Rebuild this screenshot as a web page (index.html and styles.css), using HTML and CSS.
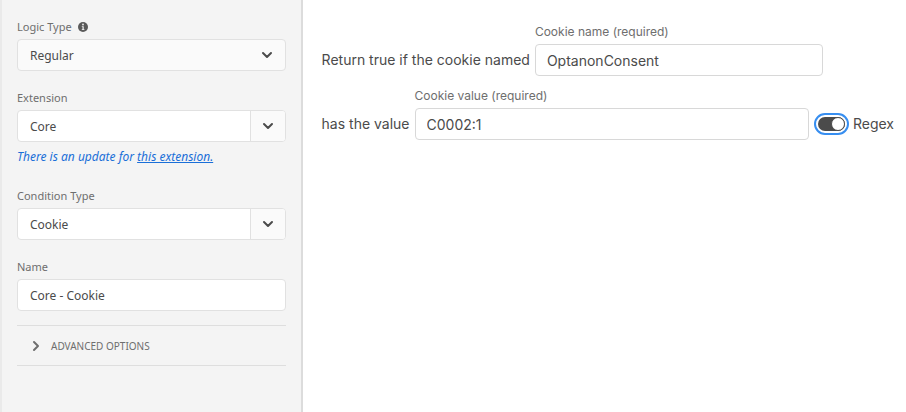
FILE: index.html
```
<!DOCTYPE html>
<html lang="en">
<head>
    <meta charset="UTF-8">
    <meta name="viewport" content="width=device-width, initial-scale=1.0">
    <title>Condition Configuration</title>
    <link rel="stylesheet" href="styles.css">
</head>
<body>

    <!-- Condition settings -->
    <aside class="sidebar">
        <div class="field">
            <div class="label-row">
                <label for="logicType">Logic Type</label>
                <svg class="info-icon" viewBox="0 0 10 10" aria-hidden="true">
                    <circle cx="5" cy="5" r="5" fill="#5a5a5a"/>
                    <circle cx="5" cy="2.5" r="0.9" fill="#f4f4f4"/>
                    <path d="M3.8 4.2h1.9v3h.7v.8H3.8v-.8h.7V5h-.7z" fill="#f4f4f4"/>
                </svg>
            </div>
            <div class="dropdown">
                <select id="logicType" class="control plain">
                    <option>Regular</option>
                    <option>Exception</option>
                </select>
                <span class="arrow">
                    <svg viewBox="0 0 12 8"><path d="M2 2l4 4 4-4"/></svg>
                </span>
            </div>
        </div>

        <div class="field">
            <label for="extension">Extension</label>
            <div class="dropdown">
                <select id="extension" class="control">
                    <option>Core</option>
                </select>
                <span class="arrow split">
                    <svg viewBox="0 0 12 8"><path d="M2 2l4 4 4-4"/></svg>
                </span>
            </div>
            <p class="update-note">There is an update for <a href="#update">this extension.</a></p>
        </div>

        <div class="field">
            <label for="conditionType">Condition Type</label>
            <div class="dropdown">
                <select id="conditionType" class="control">
                    <option>Cookie</option>
                </select>
                <span class="arrow split">
                    <svg viewBox="0 0 12 8"><path d="M2 2l4 4 4-4"/></svg>
                </span>
            </div>
        </div>

        <div class="field">
            <label for="name">Name</label>
            <input type="text" id="name" class="control" value="Core - Cookie">
        </div>

        <button type="button" class="advanced">
            <svg viewBox="0 0 8 12"><path d="M2 2l4 4-4 4"/></svg>
            Advanced Options
        </button>
    </aside>

    <!-- Cookie condition -->
    <main class="content">
        <div class="row">
            <span class="row-text">Return true if the cookie named</span>
            <div class="cookie-field cookie-name">
                <label for="cookieName">Cookie name (required)</label>
                <input type="text" id="cookieName" value="OptanonConsent" required>
            </div>
        </div>
        <div class="row">
            <span class="row-text">has the value</span>
            <div class="cookie-field cookie-value">
                <label for="cookieValue">Cookie value (required)</label>
                <input type="text" id="cookieValue" value="C0002:1" required>
            </div>
            <label class="switch">
                <input type="checkbox" role="switch" checked>
                Regex
            </label>
        </div>
    </main>

</body>
</html>
```
FILE: styles.css
```
*, *::before {
    box-sizing: border-box;
}
body {
    margin: 0;
    min-height: 100vh;
    display: flex;
    background-color: #fff;
    color: #4b4b4b;
    font-family: Inter, sans-serif;
    font-size: 14px;
}
input, select, button {
    font: inherit;
    color: inherit;
}
svg {
    display: block;
}

/* Sidebar */
.sidebar {
    width: 33.4%;
    min-width: 240px;
    padding: 19px 15px 18px 15px;
    background-color: #f4f4f4;
    border-left: 2px solid #eaeaea;
    border-right: 2px solid #dcdcdc;
    font-family: "Noto Sans", sans-serif;
    font-size: 12px;
}
.field {
    display: flex;
    flex-direction: column;
    gap: 4px;
    margin-bottom: 19px;
}
.field label {
    font-size: 11px;
    line-height: 16px;
    color: #6e6e6e;
}
.label-row {
    display: flex;
    align-items: center;
    gap: 6px;
}
.info-icon {
    width: 10px;
    height: 10px;
}
.control {
    width: 100%;
    height: 32px;
    padding: 0 12px;
    border: 1px solid #e1e1e1;
    border-radius: 4px;
    background-color: #fff;
    appearance: none;
}
.control.plain {
    background-color: #fafafa;
}
.dropdown {
    display: grid;
    grid-template-columns: 1fr 36px;
}
.dropdown .control {
    grid-area: 1 / 1 / 2 / 3;
}
.arrow {
    grid-area: 1 / 2 / 2 / 3;
    display: flex;
    align-items: center;
    justify-content: center;
    margin: 1px 1px 1px 0;
    pointer-events: none;
}
.arrow.split {
    border-left: 1px solid #e1e1e1;
    border-radius: 0 3px 3px 0;
    background-color: #fafafa;
}
.arrow svg {
    width: 12px;
    height: 8px;
}
.arrow path, .advanced path {
    fill: none;
    stroke: #4b4b4b;
    stroke-width: 2;
    stroke-linecap: round;
    stroke-linejoin: round;
}
.advanced path {
    stroke: #6e6e6e;
}
.update-note {
    margin: 3px 0 4px;
    line-height: 16px;
    font-style: italic;
    color: #1a6fd8;
}
.update-note a {
    color: inherit;
}
.advanced {
    display: flex;
    align-items: center;
    gap: 11px;
    width: 100%;
    height: 41px;
    margin-top: -5px;
    padding: 0 15px;
    border: solid #dedede;
    border-width: 1px 0;
    background: none;
    font-size: 10px;
    text-transform: uppercase;
    color: #6e6e6e;
}
.advanced svg {
    width: 8px;
    height: 12px;
}

/* Content */
.content {
    flex: 1;
    display: flex;
    flex-direction: column;
    gap: 12px;
    padding: 24px 12px 24px 19px;
}
.row {
    display: flex;
    align-items: flex-end;
    gap: 5px;
}
.row-text, .switch {
    line-height: 32px;
    white-space: nowrap;
}
.cookie-field {
    display: flex;
    flex-direction: column;
    gap: 4px;
}
.cookie-field label {
    font-size: 12px;
    line-height: 16px;
    color: #6e6e6e;
}
.cookie-field input {
    width: 100%;
    height: 32px;
    padding: 0 11px;
    border: 1px solid #d8d8d8;
    border-radius: 4px;
    background-color: #fff;
}
.cookie-name {
    flex: 0 1 288px;
}
.cookie-value {
    flex: 1;
}
.switch {
    display: flex;
    align-items: center;
    gap: 8px;
    margin-left: 4px;
}
.switch input {
    appearance: none;
    display: flex;
    justify-content: flex-end;
    width: 27px;
    height: 14px;
    margin: 0;
    border-radius: 7px;
    background-color: #4b4b4b;
    outline: 2px solid #378ef0;
    outline-offset: 2px;
}
.switch input::before {
    content: "";
    width: 14px;
    height: 14px;
    border: 1px solid #4b4b4b;
    border-radius: 50%;
    background-color: #fff;
}
.switch input:not(:checked) {
    justify-content: flex-start;
}
```
